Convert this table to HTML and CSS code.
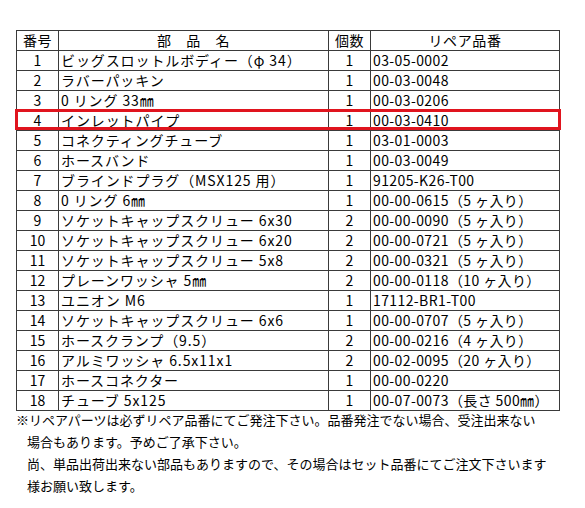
FILE: index.html
```html
<!DOCTYPE html>
<html lang="ja">
<head>
    <meta charset="UTF-8">
    <title>リペアパーツ一覧</title>
    <link rel="stylesheet" href="styles.css">
</head>
<body>
    <div class="sheet">
        <div class="table-wrap">
            <table class="parts">
                <colgroup>
                    <col class="c-no">
                    <col class="c-name">
                    <col class="c-qty">
                    <col class="c-code">
                </colgroup>
                <thead>
                    <tr>
                        <th>番号</th>
                        <th>部　品　名</th>
                        <th>個数</th>
                        <th>リペア品番</th>
                    </tr>
                </thead>
                <tbody>
                    <tr><td class="no">1</td><td class="name">ビッグスロットルボディー（φ 34）</td><td class="qty">1</td><td>03-05-0002</td></tr>
                    <tr><td class="no">2</td><td class="name">ラバーパッキン</td><td class="qty">1</td><td>00-03-0048</td></tr>
                    <tr><td class="no">3</td><td class="name">0 リング 33㎜</td><td class="qty">1</td><td>00-03-0206</td></tr>
                    <tr><td class="no">4</td><td class="name">インレットパイプ</td><td class="qty">1</td><td>00-03-0410</td></tr>
                    <tr><td class="no">5</td><td class="name">コネクティングチューブ</td><td class="qty">1</td><td>03-01-0003</td></tr>
                    <tr><td class="no">6</td><td class="name">ホースバンド</td><td class="qty">1</td><td>00-03-0049</td></tr>
                    <tr><td class="no">7</td><td class="name">ブラインドプラグ（MSX125 用）</td><td class="qty">1</td><td>91205-K26-T00</td></tr>
                    <tr><td class="no">8</td><td class="name">0 リング 6㎜</td><td class="qty">1</td><td>00-00-0615（5 ヶ入り）</td></tr>
                    <tr><td class="no">9</td><td class="name">ソケットキャップスクリュー 6x30</td><td class="qty">2</td><td>00-00-0090（5 ヶ入り）</td></tr>
                    <tr><td class="no">10</td><td class="name">ソケットキャップスクリュー 6x20</td><td class="qty">2</td><td>00-00-0721（5 ヶ入り）</td></tr>
                    <tr><td class="no">11</td><td class="name">ソケットキャップスクリュー 5x8</td><td class="qty">2</td><td>00-00-0321（5 ヶ入り）</td></tr>
                    <tr><td class="no">12</td><td class="name">プレーンワッシャ 5㎜</td><td class="qty">2</td><td>00-00-0118（10 ヶ入り）</td></tr>
                    <tr><td class="no">13</td><td class="name">ユニオン M6</td><td class="qty">1</td><td>17112-BR1-T00</td></tr>
                    <tr><td class="no">14</td><td class="name">ソケットキャップスクリュー 6x6</td><td class="qty">1</td><td>00-00-0707（5 ヶ入り）</td></tr>
                    <tr><td class="no">15</td><td class="name">ホースクランプ（9.5）</td><td class="qty">2</td><td>00-00-0216（4 ヶ入り）</td></tr>
                    <tr><td class="no">16</td><td class="name">アルミワッシャ 6.5x11x1</td><td class="qty">2</td><td>00-02-0095（20 ヶ入り）</td></tr>
                    <tr><td class="no">17</td><td class="name">ホースコネクター</td><td class="qty">1</td><td>00-00-0220</td></tr>
                    <tr><td class="no">18</td><td class="name">チューブ 5x125</td><td class="qty">1</td><td>00-07-0073（長さ 500㎜）</td></tr>
                </tbody>
            </table>
            <div class="highlight"></div>
        </div>

        <div class="notes">
            <p>※リペアパーツは必ずリペア品番にてご発注下さい。品番発注でない場合、受注出来ない</p>
            <p class="indent">場合もあります。予めご了承下さい。</p>
            <p class="indent">尚、単品出荷出来ない部品もありますので、その場合はセット品番にてご注文下さいます</p>
            <p class="indent">様お願い致します。</p>
        </div>
    </div>
</body>
</html>
```

FILE: styles.css
```css
* {
    margin: 0;
    padding: 0;
    box-sizing: border-box;
}

body {
    font-family: "Noto Sans CJK JP", "Noto Sans", sans-serif;
    background-color: #fff;
    color: #000;
}

.sheet {
    padding: 30px 0 0 16px;
}

.table-wrap {
    position: relative;
    width: 543px;
}

.parts {
    width: 543px;
    border-collapse: collapse;
    table-layout: fixed;
    font-size: 14px;
}

.c-no { width: 42px; }
.c-name { width: 270px; }
.c-qty { width: 42px; }
.c-code { width: 189px; }

.parts th,
.parts td {
    height: 20px;
    line-height: 19px;
    border: 1px solid #3a3a3a;
    white-space: nowrap;
    overflow: hidden;
    font-weight: normal;
}

.parts th {
    text-align: center;
    letter-spacing: 0.6px;
}

.parts td {
    padding-left: 2px;
    letter-spacing: 0.4px;
}

.parts td.name {
    letter-spacing: 0.9px;
}

.parts td.no,
.parts td.qty {
    text-align: center;
    padding-left: 0;
    letter-spacing: 0;
}

/* red frame round row 4 */
.highlight {
    position: absolute;
    left: -1px;
    top: 79px;
    width: 546px;
    height: 21px;
    border: 3px solid #e0141e;
}

.notes {
    font-size: 13px;
    line-height: 22px;
    margin-top: -2px;
}

.notes .indent {
    padding-left: 11px;
}
```
